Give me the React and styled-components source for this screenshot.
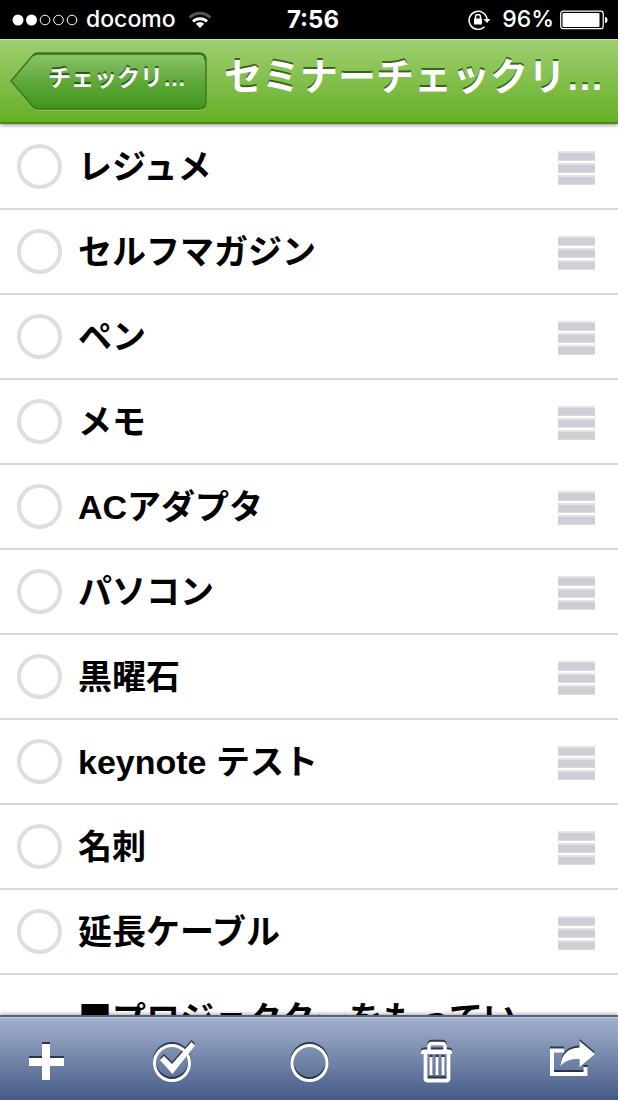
import { useState } from "react";
import styled, { createGlobalStyle } from "styled-components";

const GlobalStyle = createGlobalStyle`
  * {
    box-sizing: border-box;
  }
  body {
    margin: 0;
    background: #fff;
    font-family: "Liberation Sans", "Noto Sans CJK JP", sans-serif;
  }
`;

const Screen = styled.div`
  display: flex;
  flex-direction: column;
  height: 100vh;
  overflow: hidden;
`;

const StatusBar = styled.div`
  display: grid;
  grid-template-columns: 1fr auto 1fr;
  align-items: center;
  flex: none;
  height: 39px;
  padding: 0 10px 0 12px;
  background: #000;
  color: #fff;
  font-family: Inter, sans-serif;
  font-size: 23px;
  line-height: 39px;
`;
const StatusGroup = styled.div`
  display: flex;
  align-items: center;
  justify-content: ${({$end}) => ($end ? "flex-end" : "flex-start")};
  gap: ${({$end}) => ($end ? "6px" : "8px")};
`;
const Carrier = styled.span`
  font-weight: 500;
  margin-right: 4px;
`;
const Time = styled.span`
  font-size: 24px;
  font-weight: 700;
  padding-left: 6px;
`;
const BatteryLevel = styled.span`
  font-weight: 500;
  margin-left: 4px;
`;

const NavBar = styled.header`
  display: flex;
  align-items: center;
  flex: none;
  gap: 16px;
  position: relative;
  height: 85px;
  padding: 0 12px 0 9px;
  background: linear-gradient(#9fd070, #66ae27);
  border-top: 1px solid #c2e3a2;
  border-bottom: 2px solid #4b8a1c;
  box-shadow: 0 1px 4px rgba(0, 0, 0, 0.45);
`;
const BackButton = styled.button`
  display: grid;
  align-items: center;
  flex: none;
  padding: 0;
  border: 0;
  background: none;
  color: #fff;
  font-family: inherit;
  font-size: 23px;
  line-height: 30px;
  text-shadow: 0 -2px 0 rgba(20, 60, 10, 0.75);
  cursor: pointer;

  > * {
    grid-area: 1 / 1;
  }
`;
const BackLabel = styled.span`
  padding: 0 20px 6px 37px;
  font-weight: 700;
  white-space: nowrap;
`;
const Title = styled.h1`
  flex: 1;
  min-width: 0;
  margin: 0;
  padding-bottom: 8px;
  color: #fff;
  font-size: 38px;
  font-weight: 700;
  line-height: 52px;
  white-space: nowrap;
  text-shadow: 0 -2px 0 rgba(30, 70, 10, 0.75);
`;

const List = styled.ul`
  flex: 1;
  min-height: 0;
  margin: 0;
  padding: 1px 0 0;
  list-style: none;
  overflow-y: auto;
  scrollbar-width: none;
`;
const Row = styled.li`
  display: flex;
  align-items: center;
  gap: 16px;
  height: 85px;
  padding: 0 23px 0 17px;
  border-bottom: 2px solid #d6d6d6;
`;
const Check = styled.input`
  appearance: none;
  flex: none;
  width: 45px;
  height: 45px;
  margin: 0;
  border: 4px solid #dedede;
  border-radius: 50%;
  background: ${({checked}) => (checked ? "#7cbf40" : "#fff")};
  cursor: pointer;
`;
const ItemLabel = styled.label`
  flex: 1;
  min-width: 0;
  color: #000;
  font-size: 34px;
  font-weight: 700;
  line-height: 48px;
  white-space: nowrap;
`;
const SectionRow = styled.li`
  padding: 18px 23px 18px 78px;
  font-family: "Noto Sans CJK JP", sans-serif;
  font-size: 34px;
  font-weight: 700;
  line-height: 48px;
  white-space: nowrap;
`;
const Handle = styled.button`
  display: flex;
  flex-direction: column;
  flex: none;
  gap: 2px;
  width: 37px;
  padding: 3px 0 0;
  border: 0;
  background: none;
  cursor: grab;
`;
const HandleBar = styled.span`
  width: 100%;
  height: 10px;
  background: #cfced5;
  border-top: 2px solid #e4e3e8;
  border-bottom: 1px solid #dcdbe0;
`;

const Toolbar = styled.footer`
  display: flex;
  justify-content: space-between;
  flex: none;
  position: relative;
  padding: 21px 23px 14px 22px;
  border-top: 2px solid #55627f;
  background: linear-gradient(#a3b2cd, #455b87);
  box-shadow: inset 0 1px 0 #c3cee0, 0 -1px 4px rgba(0, 0, 0, 0.35);
`;
const ToolButton = styled.button`
  display: block;
  width: 48px;
  height: 48px;
  padding: 0;
  border: 0;
  background: none;
  color: #fff;
  cursor: pointer;

  svg {
    display: block;
    overflow: visible;
    filter: drop-shadow(0 -2px 0 rgba(25, 33, 52, 0.8));
  }
`;

const items = [
  "レジュメ",
  "セルフマガジン",
  "ペン",
  "メモ",
  "ACアダプタ",
  "パソコン",
  "黒曜石",
  "keynote テスト",
  "名刺",
  "延長ケーブル",
];

const tools = [
  {
    label: "追加",
    icon: <path d="M20 6h8v14h14v8H28v14h-8V28H7v-8h13z" fill="currentColor" />,
  },
  {
    label: "すべてチェック",
    icon: (
      <>
        <circle cx="19" cy="25" r="17.5" fill="none" stroke="currentColor" strokeWidth="3" />
        <path d="M7 22l4-4 8 8L38.500 4l3.500 3.500L19.500 36z" fill="currentColor" />
      </>
    ),
  },
  {
    label: "チェックを外す",
    icon: <circle cx="24.500" cy="25" r="17.500" fill="none" stroke="currentColor" strokeWidth="3" />,
  },
  {
    label: "削除",
    icon: (
      <g fill="none" stroke="currentColor">
        <path d="M13 12V8.500q0-3 3-3h10q3 0 3 3V12" strokeWidth="3.500" />
        <path d="M5 16v-1.500q0-3 3-3h25q3 0 3 3V16z" fill="currentColor" stroke="none" />
        <path d="M9.500 15v25q0 2.500 2.500 2.500h18q2.500 0 2.500-2.500V15" strokeWidth="4" />
        <path d="M15 19v18M21 19v18M27 19v18" strokeWidth="3" />
      </g>
    ),
  },
  {
    label: "共有",
    icon: (
      <>
        <path d="M17 12.500H5V36h33.500v-7" fill="none" stroke="currentColor" strokeWidth="4" />
        <path d="M32.500 3L48 16 32.500 29v-8C24 20.500 18 22.500 13.500 28 14.500 16.500 20.500 10 32.500 9.500z" fill="currentColor" />
      </>
    ),
  },
];

function SignalDots() {
  return (
    <svg width="66" height="12" viewBox="0 0 66 12" aria-hidden="true">
      {[6, 19.5, 33, 46.5, 60].map((cx, index) => (
        <circle
          key={cx}
          cx={cx}
          cy="6"
          r={index < 2 ? 5.5 : 4.8}
          fill={index < 2 ? "#fff" : "none"}
          stroke={index < 2 ? "none" : "#fff"}
        />
      ))}
    </svg>
  );
}

function WifiIcon() {
  return (
    <svg width="24" height="18" viewBox="0 0 24 18" fill="none" strokeWidth="3" aria-hidden="true">
      <path d="M1.500 6.500a15 15 0 0 1 21 0" stroke="#555" />
      <path d="M5 10.500a10 10 0 0 1 14 0" stroke="#fff" />
      <path d="M12 17l-4.200-4.200a6 6 0 0 1 8.400 0z" fill="#fff" />
    </svg>
  );
}

function LockIcon() {
  return (
    <svg width="24" height="20" viewBox="0 0 24 20" fill="none" stroke="#fff" aria-hidden="true">
      <path d="M16.500 16.700A9 9 0 1 1 19 9" strokeWidth="1.500" />
      <path d="M15.500 9h7L19 13z" fill="#fff" stroke="none" />
      <rect x="6" y="8.500" width="8" height="6" fill="#fff" stroke="none" />
      <path d="M7.500 9V7a2.500 2.500 0 0 1 5 0v2" strokeWidth="1.500" />
    </svg>
  );
}

function BatteryIcon() {
  return (
    <svg width="48" height="20" viewBox="0 0 48 20" aria-hidden="true">
      <rect x="0.700" y="1.200" width="42.500" height="17.500" rx="2.500" fill="none" stroke="#fff" strokeWidth="1.200" />
      <rect x="2.500" y="3" width="37" height="14" rx="1" fill="#fff" />
      <path d="M45 7q2.500 0 2.500 3T45 13z" fill="#fff" />
    </svg>
  );
}

function BackShape() {
  return (
    <svg width="199" height="59" viewBox="0 0 199 59" aria-hidden="true">
      <defs>
        <linearGradient id="back-fill" x1="0" y1="0" x2="0" y2="1">
          <stop offset="0" stopColor="#8cc56b" />
          <stop offset="0.500" stopColor="#60a93b" />
          <stop offset="1" stopColor="#3f951b" />
        </linearGradient>
      </defs>
      <path
        d="M24 3q2-2 5-2h161q7 0 7 7v42q0 7-7 7H29q-3 0-5-2L2 29z"
        transform="translate(0 1)"
        fill="none"
        stroke="#a9d884"
      />
      <path
        d="M24 3q2-2 5-2h161q7 0 7 7v42q0 7-7 7H29q-3 0-5-2L2 29z"
        fill="url(#back-fill)"
        stroke="#3c751f"
        strokeWidth="1.500"
      />
      <path d="M24 4q2-2 5-2h161q6 0 6 6" fill="none" stroke="#386b22" strokeWidth="1.500" />
    </svg>
  );
}

export default function App() {
  const [checked, setChecked] = useState({});

  const toggle = (item) => {
    setChecked((prev) => ({ ...prev, [item]: !prev[item] }));
  };

  return (
    <>
      <GlobalStyle />
      <Screen>
        <StatusBar>
          <StatusGroup>
            <SignalDots />
            <Carrier>docomo</Carrier>
            <WifiIcon />
          </StatusGroup>
          <Time>7:56</Time>
          <StatusGroup $end>
            <LockIcon />
            <BatteryLevel>96%</BatteryLevel>
            <BatteryIcon />
          </StatusGroup>
        </StatusBar>
        <NavBar>
          <BackButton type="button">
            <BackShape />
            <BackLabel>チェックリ…</BackLabel>
          </BackButton>
          <Title>セミナーチェックリ…</Title>
        </NavBar>
        <List>
          {items.map((item, index) => (
            <Row key={item}>
              <Check
                type="checkbox"
                id={`item-${index}`}
                checked={!!checked[item]}
                onChange={() => toggle(item)}
              />
              <ItemLabel htmlFor={`item-${index}`}>{item}</ItemLabel>
              <Handle type="button" aria-label="並べ替え">
                <HandleBar />
                <HandleBar />
                <HandleBar />
              </Handle>
            </Row>
          ))}
          <SectionRow>■プロジェクターをもってい</SectionRow>
        </List>
        <Toolbar>
          {tools.map(({ label, icon }) => (
            <ToolButton key={label} type="button" aria-label={label}>
              <svg width="48" height="48" viewBox="0 0 48 48" aria-hidden="true">
                {icon}
              </svg>
            </ToolButton>
          ))}
        </Toolbar>
      </Screen>
    </>
  );
}
